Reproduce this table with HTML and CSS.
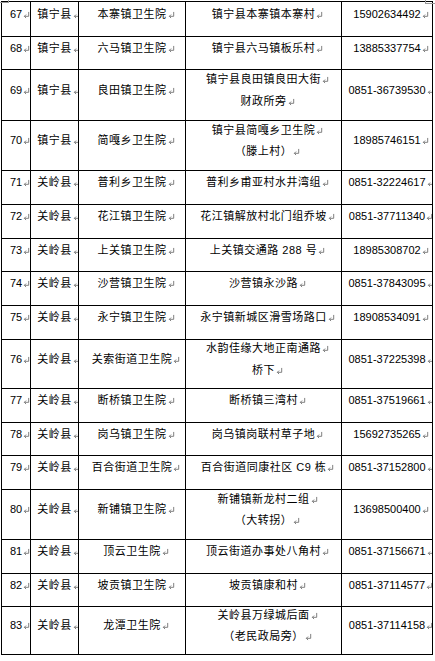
FILE: index.html
```html
<!DOCTYPE html>
<html lang="zh-CN">
<head>
<meta charset="utf-8">
<title>卫生院列表</title>
<link rel="stylesheet" href="styles.css">
</head>
<body>
<svg class="defs" width="0" height="0" aria-hidden="true">
  <symbol id="pm" viewBox="0 0 8 8">
    <path d="M6.5 0.5 V5.5 H1.5 M3.5 3.5 L1.5 5.5 L3.5 7.5" fill="none" stroke="#6f6f6f" stroke-width="1"/>
  </symbol>
</svg>
<span class="corner corner-tl"></span>
<span class="corner corner-tr"></span>
<table class="grid">
  <colgroup>
    <col class="c-no"><col class="c-county"><col class="c-name"><col class="c-addr"><col class="c-tel">
  </colgroup>
  <tbody>
    <tr class="h35"><td class="num"><div class="t">67<i class="pm"><svg><use href="#pm"/></svg></i></div></td><td><div class="t">镇宁县<i class="pm"><svg><use href="#pm"/></svg></i></div></td><td><div class="t">本寨镇卫生院<i class="pm"><svg><use href="#pm"/></svg></i></div></td><td><div class="t">镇宁县本寨镇本寨村<i class="pm"><svg><use href="#pm"/></svg></i></div></td><td class="num"><div class="t">15902634492<i class="pm"><svg><use href="#pm"/></svg></i></div></td></tr>
    <tr class="h33"><td class="num"><div class="t">68<i class="pm"><svg><use href="#pm"/></svg></i></div></td><td><div class="t">镇宁县<i class="pm"><svg><use href="#pm"/></svg></i></div></td><td><div class="t">六马镇卫生院<i class="pm"><svg><use href="#pm"/></svg></i></div></td><td><div class="t">镇宁县六马镇板乐村<i class="pm"><svg><use href="#pm"/></svg></i></div></td><td class="num"><div class="t">13885337754<i class="pm"><svg><use href="#pm"/></svg></i></div></td></tr>
    <tr class="h51"><td class="num"><div class="t">69<i class="pm"><svg><use href="#pm"/></svg></i></div></td><td><div class="t">镇宁县<i class="pm"><svg><use href="#pm"/></svg></i></div></td><td><div class="t">良田镇卫生院<i class="pm"><svg><use href="#pm"/></svg></i></div></td><td><div class="t">镇宁县良田镇良田大街<i class="pm"><svg><use href="#pm"/></svg></i><br>财政所旁<i class="pm"><svg><use href="#pm"/></svg></i></div></td><td class="num"><div class="t">0851-36739530<i class="pm"><svg><use href="#pm"/></svg></i></div></td></tr>
    <tr class="h50"><td class="num"><div class="t">70<i class="pm"><svg><use href="#pm"/></svg></i></div></td><td><div class="t">镇宁县<i class="pm"><svg><use href="#pm"/></svg></i></div></td><td><div class="t">简嘎乡卫生院<i class="pm"><svg><use href="#pm"/></svg></i></div></td><td><div class="t">镇宁县简嘎乡卫生院<i class="pm"><svg><use href="#pm"/></svg></i><br>（滕上村）<i class="pm"><svg><use href="#pm"/></svg></i></div></td><td class="num"><div class="t">18985746151<i class="pm"><svg><use href="#pm"/></svg></i></div></td></tr>
    <tr class="h34"><td class="num"><div class="t">71<i class="pm"><svg><use href="#pm"/></svg></i></div></td><td><div class="t">关岭县<i class="pm"><svg><use href="#pm"/></svg></i></div></td><td><div class="t">普利乡卫生院<i class="pm"><svg><use href="#pm"/></svg></i></div></td><td><div class="t">普利乡甫亚村水井湾组<i class="pm"><svg><use href="#pm"/></svg></i></div></td><td class="num"><div class="t">0851-32224617<i class="pm"><svg><use href="#pm"/></svg></i></div></td></tr>
    <tr class="h34"><td class="num"><div class="t">72<i class="pm"><svg><use href="#pm"/></svg></i></div></td><td><div class="t">关岭县<i class="pm"><svg><use href="#pm"/></svg></i></div></td><td><div class="t">花江镇卫生院<i class="pm"><svg><use href="#pm"/></svg></i></div></td><td><div class="t">花江镇解放村北门组乔坡<i class="pm"><svg><use href="#pm"/></svg></i></div></td><td class="num"><div class="t">0851-37711340<i class="pm"><svg><use href="#pm"/></svg></i></div></td></tr>
    <tr class="h33"><td class="num"><div class="t">73<i class="pm"><svg><use href="#pm"/></svg></i></div></td><td><div class="t">关岭县<i class="pm"><svg><use href="#pm"/></svg></i></div></td><td><div class="t">上关镇卫生院<i class="pm"><svg><use href="#pm"/></svg></i></div></td><td><div class="t">上关镇交通路 288 号<i class="pm"><svg><use href="#pm"/></svg></i></div></td><td class="num"><div class="t">18985308702<i class="pm"><svg><use href="#pm"/></svg></i></div></td></tr>
    <tr class="h34"><td class="num"><div class="t">74<i class="pm"><svg><use href="#pm"/></svg></i></div></td><td><div class="t">关岭县<i class="pm"><svg><use href="#pm"/></svg></i></div></td><td><div class="t">沙营镇卫生院<i class="pm"><svg><use href="#pm"/></svg></i></div></td><td><div class="t">沙营镇永沙路<i class="pm"><svg><use href="#pm"/></svg></i></div></td><td class="num"><div class="t">0851-37843095<i class="pm"><svg><use href="#pm"/></svg></i></div></td></tr>
    <tr class="h34"><td class="num"><div class="t">75<i class="pm"><svg><use href="#pm"/></svg></i></div></td><td><div class="t">关岭县<i class="pm"><svg><use href="#pm"/></svg></i></div></td><td><div class="t">永宁镇卫生院<i class="pm"><svg><use href="#pm"/></svg></i></div></td><td><div class="t">永宁镇新城区滑雪场路口<i class="pm"><svg><use href="#pm"/></svg></i></div></td><td class="num"><div class="t">18908534091<i class="pm"><svg><use href="#pm"/></svg></i></div></td></tr>
    <tr class="h49"><td class="num"><div class="t">76<i class="pm"><svg><use href="#pm"/></svg></i></div></td><td><div class="t">关岭县<i class="pm"><svg><use href="#pm"/></svg></i></div></td><td><div class="t">关索街道卫生院<i class="pm"><svg><use href="#pm"/></svg></i></div></td><td><div class="t">水韵佳缘大地正南通路<i class="pm"><svg><use href="#pm"/></svg></i><br>桥下<i class="pm"><svg><use href="#pm"/></svg></i></div></td><td class="num"><div class="t">0851-37225398<i class="pm"><svg><use href="#pm"/></svg></i></div></td></tr>
    <tr class="h34"><td class="num"><div class="t">77<i class="pm"><svg><use href="#pm"/></svg></i></div></td><td><div class="t">关岭县<i class="pm"><svg><use href="#pm"/></svg></i></div></td><td><div class="t">断桥镇卫生院<i class="pm"><svg><use href="#pm"/></svg></i></div></td><td><div class="t">断桥镇三湾村<i class="pm"><svg><use href="#pm"/></svg></i></div></td><td class="num"><div class="t">0851-37519661<i class="pm"><svg><use href="#pm"/></svg></i></div></td></tr>
    <tr class="h33"><td class="num"><div class="t">78<i class="pm"><svg><use href="#pm"/></svg></i></div></td><td><div class="t">关岭县<i class="pm"><svg><use href="#pm"/></svg></i></div></td><td><div class="t">岗乌镇卫生院<i class="pm"><svg><use href="#pm"/></svg></i></div></td><td><div class="t">岗乌镇岗联村草子地<i class="pm"><svg><use href="#pm"/></svg></i></div></td><td class="num"><div class="t">15692735265<i class="pm"><svg><use href="#pm"/></svg></i></div></td></tr>
    <tr class="h34"><td class="num"><div class="t">79<i class="pm"><svg><use href="#pm"/></svg></i></div></td><td><div class="t">关岭县<i class="pm"><svg><use href="#pm"/></svg></i></div></td><td><div class="t">百合街道卫生院<i class="pm"><svg><use href="#pm"/></svg></i></div></td><td><div class="t">百合街道同康社区 C9 栋<i class="pm"><svg><use href="#pm"/></svg></i></div></td><td class="num"><div class="t">0851-37152800<i class="pm"><svg><use href="#pm"/></svg></i></div></td></tr>
    <tr class="h50"><td class="num"><div class="t">80<i class="pm"><svg><use href="#pm"/></svg></i></div></td><td><div class="t">关岭县<i class="pm"><svg><use href="#pm"/></svg></i></div></td><td><div class="t">新铺镇卫生院<i class="pm"><svg><use href="#pm"/></svg></i></div></td><td><div class="t">新铺镇新龙村二组<i class="pm"><svg><use href="#pm"/></svg></i><br>（大转拐）<i class="pm"><svg><use href="#pm"/></svg></i></div></td><td class="num"><div class="t">13698500400<i class="pm"><svg><use href="#pm"/></svg></i></div></td></tr>
    <tr class="h34"><td class="num"><div class="t">81<i class="pm"><svg><use href="#pm"/></svg></i></div></td><td><div class="t">关岭县<i class="pm"><svg><use href="#pm"/></svg></i></div></td><td><div class="t">顶云卫生院<i class="pm"><svg><use href="#pm"/></svg></i></div></td><td><div class="t">顶云街道办事处八角村<i class="pm"><svg><use href="#pm"/></svg></i></div></td><td class="num"><div class="t">0851-37156671<i class="pm"><svg><use href="#pm"/></svg></i></div></td></tr>
    <tr class="h33"><td class="num"><div class="t">82<i class="pm"><svg><use href="#pm"/></svg></i></div></td><td><div class="t">关岭县<i class="pm"><svg><use href="#pm"/></svg></i></div></td><td><div class="t">坡贡镇卫生院<i class="pm"><svg><use href="#pm"/></svg></i></div></td><td><div class="t">坡贡镇康和村<i class="pm"><svg><use href="#pm"/></svg></i></div></td><td class="num"><div class="t">0851-37114577<i class="pm"><svg><use href="#pm"/></svg></i></div></td></tr>
    <tr class="h48"><td class="num"><div class="t">83<i class="pm"><svg><use href="#pm"/></svg></i></div></td><td><div class="t">关岭县<i class="pm"><svg><use href="#pm"/></svg></i></div></td><td><div class="t">龙潭卫生院<i class="pm"><svg><use href="#pm"/></svg></i></div></td><td><div class="t">关岭县万绿城后面<i class="pm"><svg><use href="#pm"/></svg></i><br>（老民政局旁）<i class="pm"><svg><use href="#pm"/></svg></i></div></td><td class="num"><div class="t">0851-37114158<i class="pm"><svg><use href="#pm"/></svg></i></div></td></tr>
  </tbody>
</table>
</body>
</html>
```
FILE: styles.css
```css
html, body {
  margin: 0;
  padding: 0;
  background: #ffffff;
}

body {
  position: relative;
  width: 435px;
  height: 661px;
  overflow: hidden;
  font-family: "Liberation Sans", "Noto Sans CJK SC", sans-serif;
  color: #000000;
}

.defs {
  position: absolute;
  width: 0;
  height: 0;
}

.corner {
  position: absolute;
  display: block;
}

.corner-tl {
  left: 0;
  top: 0;
  width: 8px;
  height: 2px;
  border-right: 1px solid #9a9a9a;
  border-bottom: 1px solid #9a9a9a;
}

.corner-tr {
  left: 425px;
  top: 0;
  width: 10px;
  height: 3px;
  border-left: 1px solid #9a9a9a;
  border-bottom: 1px solid #9a9a9a;
}

.grid {
  margin: 1px 0 0 1px;
  border-collapse: collapse;
  table-layout: fixed;
  width: 431px;
}

.c-no { width: 29px; }
.c-county { width: 48px; }
.c-name { width: 107px; }
.c-addr { width: 156px; }
.c-tel { width: 91px; }

.grid td {
  border: 1px solid #000000;
  padding: 0 5px;
  text-align: center;
  vertical-align: middle;
  font-size: 11px;
  letter-spacing: 0.5px;
  white-space: nowrap;
  overflow: hidden;
}

.grid td.num {
  letter-spacing: 0;
}

.t {
  line-height: 21.5px;
  margin: -5px 0 4px 0;
}

.h33 { height: 33px; }
.h34 { height: 34px; }
.h35 { height: 35px; }
.h48 { height: 48px; }
.h49 { height: 49px; }
.h50 { height: 50px; }
.h51 { height: 51px; }

.pm {
  display: inline-block;
  width: 0;
  height: 8px;
  vertical-align: -1px;
  overflow: visible;
}

.pm svg {
  display: block;
  width: 7px;
  height: 8px;
  margin-left: 1px;
}
```
